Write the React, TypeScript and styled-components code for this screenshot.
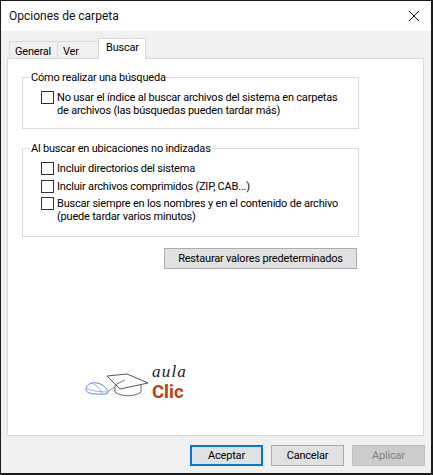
import React from "react";
import styled, { createGlobalStyle } from "styled-components";

const GlobalStyle = createGlobalStyle`
  html, body {
    margin: 0;
    padding: 0;
    background: #f0f0f0;
  }
`;

const Window = styled.div`
  box-sizing: border-box;
  width: 433px;
  height: 475px;
  display: flex;
  flex-direction: column;
  border: 1px solid #1c1c1c;
  border-bottom-width: 2px;
  border-right-width: 2px;
  background: #f0f0f0;
  font-family: Roboto, "Liberation Sans", sans-serif;
  font-size: 11px;
  letter-spacing: -0.2px;
  color: #000;
`;

const TitleBar = styled.div`
  height: 30px;
  flex: none;
  display: flex;
  align-items: center;
  justify-content: space-between;
  padding: 0 12px 0 8px;
  background: #fff;
  font-size: 12px;
  letter-spacing: 0;
  color: #111;
`;

const CloseIcon = styled.svg`
  width: 10px;
  height: 10px;
  display: block;
`;

const Body = styled.div`
  flex: 1;
  display: flex;
  flex-direction: column;
  padding: 7px 7px 0 6px;
`;

const TabRow = styled.div`
  display: flex;
  align-items: flex-end;
  height: 21px;
  padding-left: 2px;
  margin-bottom: -1px;
`;

const Tab = styled.div<{ $active?: boolean; $width: number }>`
  box-sizing: border-box;
  width: ${(p) => p.$width}px;
  height: ${(p) => (p.$active ? 21 : 18)}px;
  border: 1px solid #d9d9d9;
  border-right-width: ${(p) => (p.$active ? 1 : 0)}px;
  border-bottom: ${(p) => (p.$active ? "none" : "1px solid #d9d9d9")};
  background: ${(p) => (p.$active ? "#fff" : "#f0f0f0")};
  padding: ${(p) => (p.$active ? "2px 0 0 7px" : "3px 0 0 5px")};
  line-height: 14px;
  position: relative;
  z-index: ${(p) => (p.$active ? 1 : 0)};
`;

const Panel = styled.div`
  box-sizing: border-box;
  width: 417px;
  height: 378px;
  display: flex;
  flex-direction: column;
  border: 1px solid #d9d9d9;
  background: #fff;
  padding: 12px 0 0 14px;
`;

const Group = styled.fieldset<{ $height: number; $after: number }>`
  box-sizing: border-box;
  width: 337px;
  height: ${(p) => p.$height}px;
  margin: 0 0 ${(p) => p.$after}px;
  padding: 0;
  border: 1px solid #dcdcdc;
`;

const Legend = styled.legend`
  padding: 0 1px;
  margin-left: 7px;
  line-height: 13px;
`;

const OptionList = styled.div`
  display: flex;
  flex-direction: column;
  gap: 4.5px;
  padding: 7px 0 0 18px;
`;

const Option = styled.label`
  display: flex;
  align-items: flex-start;
  gap: 3px;
  line-height: 13px;
`;

const Box = styled.span`
  box-sizing: border-box;
  flex: none;
  width: 13px;
  height: 13px;
  border: 1px solid #333;
  background: #fff;
`;

const RestoreRow = styled.div`
  width: 335px;
  display: flex;
  justify-content: flex-end;
`;

const Button = styled.div<{ $width: number; $primary?: boolean; $disabled?: boolean }>`
  box-sizing: border-box;
  width: ${(p) => p.$width}px;
  height: 21px;
  display: flex;
  align-items: center;
  justify-content: center;
  background: ${(p) => (p.$disabled ? "#cccccc" : "#e1e1e1")};
  color: ${(p) => (p.$disabled ? "#838383" : "#000")};
  border: ${(p) =>
    p.$primary ? "2px solid #0078d7" : p.$disabled ? "1px solid #bfbfbf" : "1px solid #adadad"};
`;

const Logo = styled.div`
  display: flex;
  align-items: flex-start;
  gap: 2px;
  margin: 94px 0 0 63px;
`;

const LogoArt = styled.svg`
  width: 65px;
  height: 25px;
  flex: none;
  display: block;
  margin-top: 9px;
`;

const LogoText = styled.div`
  display: flex;
  flex-direction: column;
  letter-spacing: 0;
`;

const Aula = styled.span`
  font-family: "Liberation Serif", serif;
  font-style: italic;
  font-size: 17px;
  line-height: 17px;
  letter-spacing: 1.2px;
  color: #222;
`;

const Clic = styled.span`
  font-family: Roboto, sans-serif;
  font-weight: 700;
  font-size: 18.5px;
  line-height: 25px;
  color: #b8430f;
`;

const Footer = styled.div`
  display: flex;
  justify-content: flex-end;
  gap: 8px;
  padding: 9px 0 0;
  width: 418px;
`;

export default function App() {
  return (
    <>
      <GlobalStyle />
      <Window>
        <TitleBar>
          <span>Opciones de carpeta</span>
          <CloseIcon viewBox="0 0 10 10">
            <path d="M0 0L10 10M10 0L0 10" stroke="#111" strokeWidth="1" fill="none" />
          </CloseIcon>
        </TitleBar>
        <Body>
          <TabRow>
            <Tab $width={48}>General</Tab>
            <Tab $width={41}>Ver</Tab>
            <Tab $active $width={48}>Buscar</Tab>
          </TabRow>
          <Panel>
            <Group $height={58} $after={13}>
              <Legend>Cómo realizar una búsqueda</Legend>
              <OptionList>
                <Option>
                  <Box />
                  <span>
                    No usar el índice al buscar archivos del sistema en carpetas
                    <br />
                    de archivos (las búsquedas pueden tardar más)
                  </span>
                </Option>
              </OptionList>
            </Group>
            <Group $height={95} $after={11}>
              <Legend>Al buscar en ubicaciones no indizadas</Legend>
              <OptionList>
                <Option>
                  <Box />
                  <span>Incluir directorios del sistema</span>
                </Option>
                <Option>
                  <Box />
                  <span>Incluir archivos comprimidos (ZIP, CAB...)</span>
                </Option>
                <Option>
                  <Box />
                  <span>
                    Buscar siempre en los nombres y en el contenido de archivo
                    <br />
                    (puede tardar varios minutos)
                  </span>
                </Option>
              </OptionList>
            </Group>
            <RestoreRow>
              <Button $width={193}>Restaurar valores predeterminados</Button>
            </RestoreRow>
            <Logo>
              <LogoArt viewBox="0 0 65 25">
                <path
                  d="M1 17C2 12 7 10 12 11C18 12 23 17 23 20C23 23 18 22 11 22C6 22 1 21 1 17Z"
                  fill="#fff"
                  stroke="#5b82e8"
                  strokeWidth="1"
                />
                <path d="M7 11C11 13 15 16 17 21M2 17C8 19 15 20 23 20" fill="none" stroke="#7f9fee" strokeWidth="0.8" />
                <path d="M23 19L30 15" stroke="#777" strokeWidth="0.8" />
                <path
                  d="M30 13V20C36 25 50 25 56 20V11"
                  fill="#fff"
                  stroke="#666"
                  strokeWidth="1"
                />
                <path d="M22 4L42 2L63 11L35 17Z" fill="#fff" stroke="#555" strokeWidth="1" />
                <path d="M30 13L40 8" stroke="#555" strokeWidth="0.8" />
              </LogoArt>
              <LogoText>
                <Aula>aula</Aula>
                <Clic>Clic</Clic>
              </LogoText>
            </Logo>
          </Panel>
          <Footer>
            <Button $width={73} $primary>Aceptar</Button>
            <Button $width={73}>Cancelar</Button>
            <Button $width={73} $disabled>Aplicar</Button>
          </Footer>
        </Body>
      </Window>
    </>
  );
}
